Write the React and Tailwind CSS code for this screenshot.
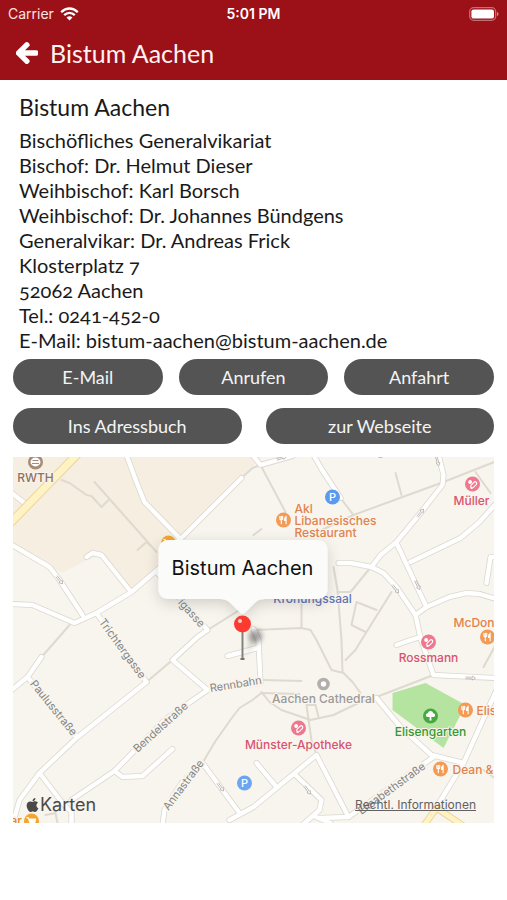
import React from 'react';
import { FaArrowLeft, FaApple } from 'react-icons/fa';

const ADDRESS = [
  'Bischöfliches Generalvikariat',
  'Bischof: Dr. Helmut Dieser',
  'Weihbischof: Karl Borsch',
  'Weihbischof: Dr. Johannes Bündgens',
  'Generalvikar: Dr. Andreas Frick',
  'Klosterplatz 7',
  '52062 Aachen',
  'Tel.: 0241-452-0',
  'E-Mail: bistum-aachen@bistum-aachen.de'
];

const FOOTPATHS = [
  'M62 480L70 483L87 495L92 496L102 507L110 499',
  'M95 482L157 552',
  'M138 550L147 542L150 545',
  'M242 478L253 468L261 465L286 512',
  'M254 535L262 529',
  'M396 473L402 495',
  'M341 498L354 515L444 482L495 462',
  'M354 515L318 532',
  'M476 472L491 493',
  'M334 567L338 590L342 640',
  'M338 592L351 592L369 570',
  'M302 603V628',
  'M254 630L302 628L311 630L317 640L332 670L344 673L353 682L361 693',
  'M343 672L342 640',
  'M346 660L356 650L362 640L392 592',
  'M357 602L377 610M357 602L352 625L366 632',
  'M264 680L302 681',
  'M262 692L270 702L282 710L311 720L334 715L361 702L377 697L434 675',
  'M262 693L300 694',
  'M307 705L309 720L312 740L317 755M307 705L316 705L319 717',
  'M203 763L216 741L233 717L240 708L253 700L262 693',
  'M147 682L173 660',
  'M42 657L57 640L70 625',
  'M208 630L240 610',
  'M484 770L495 778',
  'M484 667L495 647',
  'M46 815L56 813L58 823'
];

const ROADS = [
  'M11 492L25 503',
  'M127 455L137 482L145 502L180 538L170 560',
  'M242 478L182 538',
  'M11 544L50 567L60 580L83 615',
  'M11 604L33 605L75 623L97 613L132 592L160 568L182 548',
  'M87 557L93 553L102 555L130 590',
  'M97 613L147 682',
  'M158 573L208 630L198 637L173 660L208 690',
  'M261 683L208 690L165 720L115 771L72 800',
  'M115 771L123 777L143 776L173 749',
  'M147 682L77 738L40 773L20 800L13 825',
  'M28 677L77 737',
  'M42 657L28 677L11 691',
  'M40 773L63 803L72 812L72 825',
  'M261 683L259 640L254 629',
  'M228 656L258 648',
  'M203 763L240 813M203 763L182 783L165 810L163 825',
  'M230 820L254 807L317 755L349 817',
  'M257 763L277 787',
  'M296 775L322 800L320 810L304 824',
  'M314 816L331 823M320 818L349 817L434 757',
  'M377 698L401 727L432 755L464 763',
  'M497 690L464 763L437 807',
  'M397 645L411 640L421 637',
  'M339 563L351 563L372 567L384 573L397 587L416 615L421 638L434 675L497 678',
  'M439 455L444 475L443 485L421 513L397 542L381 555L372 567',
  'M397 543L427 607',
  'M411 562L461 538L480 522L497 503',
  'M416 615L427 607L450 597L467 593L480 594L497 599',
  'M497 557L491 557L487 583',
  'M314 455L322 469L341 498',
  'M253 455L261 465L293 456'
];

const ONE_WAY = [
  { x: 60, y: 580, r: 52 },
  { x: 282, y: 458, r: -16 },
  { x: 438, y: 461, r: 75 },
  { x: 421, y: 513, r: -52 },
  { x: 396, y: 589, r: 52 },
  { x: 418, y: 585, r: 65 },
  { x: 471, y: 678, r: 3 },
  { x: 221, y: 787, r: 53 },
  { x: 308, y: 790, r: 55 }
];

const STREETS = [
  { name: 'Trichtergasse', x: 99, y: 622, r: 54 },
  { name: 'Paulusstraße', x: 30, y: 684, r: 51 },
  { name: 'Bendelstraße', x: 138, y: 753, r: -42 },
  { name: 'Annastraße', x: 169, y: 811, r: -53 },
  { name: 'Elisabethstraße', x: 362, y: 815, r: -36 },
  { name: 'Rennbahn', x: 211, y: 692, r: -9 },
  { name: 'igasse', x: 178, y: 603, r: 48 }
];

const ORANGE = '#e1824d';
const PINK = '#d9536f';

const POIS = [
  { label: 'RWTH', x: 36, y: 482, color: '#8f7061' },
  { label: 'Akl', x: 295, y: 513, color: ORANGE, anchor: 'start' },
  { label: 'Libanesisches', x: 295, y: 525, color: ORANGE, anchor: 'start' },
  { label: 'Restaurant', x: 295, y: 537, color: ORANGE, anchor: 'start' },
  { label: 'Müller', x: 472, y: 505, color: PINK },
  { label: 'Krönungssaal', x: 313, y: 603, color: '#6276b5' },
  { label: 'McDon', x: 454, y: 627, color: ORANGE, anchor: 'start' },
  { label: 'Rossmann', x: 429, y: 662, color: PINK },
  { label: 'Aachen Cathedral', x: 324, y: 703, color: '#9b9a99' },
  { label: 'Elisengarten', x: 431, y: 736, color: '#35982f' },
  { label: 'Elis', x: 477, y: 715, color: ORANGE, anchor: 'start' },
  { label: 'Münster-Apotheke', x: 299, y: 749, color: PINK },
  { label: 'Dean &', x: 453, y: 774, color: ORANGE, anchor: 'start' },
  { label: 'ar', x: 11, y: 825, color: '#dd8b35', anchor: 'start' }
];

const Fork = () => (
  <g fill="none" stroke="#fff" strokeWidth="1.1" strokeLinecap="round">
    <path d="M-3.6-3.6v2.4q0 1.2 1.4 1.2t1.4-1.2v-2.4M-2.2-3.6v7.4" />
    <path d="M2.6 3.8v-7.4q-1.8 1-1.6 4h1.6" fill="#fff" />
  </g>
);

const Pills = () => (
  <g fill="none" stroke="#fff" strokeWidth="1.1">
    <rect x="-3.6" y="-1.6" width="7.2" height="3.2" rx="1.6" transform="translate(1.2 0.8) rotate(-45)" />
    <circle cx="-2.4" cy="-2" r="1.9" fill="#fff" stroke="none" />
    <circle cx="-1" cy="4" r="1.1" fill="#fff" stroke="none" />
  </g>
);

const Parking = () => (
  <text y="4" textAnchor="middle" fontSize="11" fontWeight="500" fill="#fff">P</text>
);

const Tree = () => (
  <g fill="#fff">
    <path d="M-4.6-.2q-.4-2.2 1.8-2.5Q-2-5 0-5t2.8 2.3q2.2.3 1.8 2.5-.6 1.4-2.4 1.2h-4.4q-1.8.2-2.4-1.2z" />
    <path d="M-.8 0h1.6l.2 4.6h-2z" />
  </g>
);

const Cart = () => (
  <path d="M-5-3.5h1.8l1.4 5.6h5l1.2-4.2h-7z" fill="#fff" stroke="#fff" strokeWidth="0.8" />
);

const BADGES = [
  { x: 284, y: 520, color: '#f39a55', Icon: Fork },
  { x: 488, y: 637, color: '#f39a55', Icon: Fork },
  { x: 466, y: 710, color: '#f39a55', Icon: Fork },
  { x: 441, y: 769, color: '#f39a55', Icon: Fork },
  { x: 473, y: 484, color: '#f0788e', Icon: Pills },
  { x: 429, y: 642, color: '#f0788e', Icon: Pills },
  { x: 299, y: 728, color: '#f0788e', Icon: Pills },
  { x: 333, y: 497, color: '#5b9af0', Icon: Parking },
  { x: 381, y: 450, color: '#5b9af0' },
  { x: 245, y: 783, color: '#6ea5f0', Icon: Parking },
  { x: 431, y: 716, color: '#46a83f', Icon: Tree },
  { x: 32, y: 821, color: '#f2a631', Icon: Cart },
  { x: 169, y: 543, color: '#f2a631', Icon: Cart }
];

const StatusBar = () => (
  <div className="grid grid-cols-3 items-center h-7 px-2 font-['Inter','Liberation_Sans',sans-serif] text-sm text-white">
    <div className="flex items-center gap-1.5">
      <span className="text-red-100">Carrier</span>
      <svg className="w-[19px] h-[14px]" viewBox="0 0 19 14" aria-hidden="true">
        <g fill="none" stroke="#fff" strokeWidth="2.3">
          <path d="M1.2 5.2Q5 1.5 9.5 1.5T17.8 5.2" />
          <path d="M4.2 8.2Q6.6 5.9 9.5 5.9T14.8 8.2" />
        </g>
        <path d="M9.5 13.6L6.5 10.5Q9.5 8.2 12.5 10.5Z" fill="#fff" />
      </svg>
    </div>
    <div className="text-center font-semibold">5:01 PM</div>
    <svg className="w-[30px] h-[14px] justify-self-end" viewBox="0 0 30 14" aria-hidden="true">
      <rect x="0.7" y="0.7" width="26" height="12.6" rx="4" fill="none" stroke="#fff" strokeOpacity="0.4" strokeWidth="1.3" />
      <rect x="2.4" y="2.4" width="22.600" height="9.200" rx="2.200" fill="#fff" />
      <path d="M28 5v4q1.600-.6 1.600-2t-1.600-2z" fill="#fff" fillOpacity="0.5" />
    </svg>
  </div>
);

const ActionButton = ({ children }) => (
  <button
    type="button"
    className="h-9 rounded-full bg-[#545454] text-gray-100 text-lg leading-6 text-center hover:bg-[#444444]"
  >
    {children}
  </button>
);

const MapView = () => (
  <div className="relative h-[366px] overflow-hidden bg-[#f8f5ee] font-['Inter','Liberation_Sans',sans-serif]">
    <svg className="block w-full h-full" viewBox="13 457 482 366" preserveAspectRatio="xMidYMid slice">
      <defs>
        <filter id="calloutShadow" x="-20%" y="-30%" width="140%" height="180%">
          <feDropShadow dx="0" dy="4" stdDeviation="7" floodColor="#000" floodOpacity="0.16" />
        </filter>
        <filter id="pinShadow" x="-50%" y="-50%" width="200%" height="200%">
          <feGaussianBlur stdDeviation="2.5" />
        </filter>
      </defs>

      {/* campus and park */}
      <path
        d="M13 457H262L242 478L182 538L160 567L132 590L103 555L87 560L63 573L50 567L13 545Z"
        fill="#f6eee0"
      />
      <path d="M393 693L426 683L466 705L444 748L393 710Z" fill="#b5e3a0" />

      <g fill="none" strokeLinejoin="round" strokeLinecap="round">
        <g stroke="#dedad0" strokeWidth="2">
          {FOOTPATHS.map(d => <path key={d} d={d} />)}
        </g>
        <g stroke="#dcd8cf" strokeWidth="6">
          {ROADS.map(d => <path key={d} d={d} />)}
        </g>
        <g stroke="#ffffff" strokeWidth="4.4">
          {ROADS.map(d => <path key={d} d={d} />)}
        </g>
        <path d="M8 526L78 454" stroke="#ecd5a0" strokeWidth="9" />
        <path d="M8 526L78 454" stroke="#fff3c4" strokeWidth="7" />
        <path d="M424 826L437 808L464 826" stroke="#ecd5a0" strokeWidth="7" />
        <path d="M424 826L437 808L464 826" stroke="#fff3c4" strokeWidth="5" />
      </g>

      {ONE_WAY.map(a => (
        <path
          key={`${a.x}-${a.y}`}
          d="M-5-.8H2V-2L5 0L2 2V.8H-5"
          transform={`translate(${a.x} ${a.y}) rotate(${a.r})`}
          fill="#fff"
          stroke="#aaa8a4"
          strokeWidth="0.7"
        />
      ))}

      {/* street names and places */}
      <g stroke="#f8f5ee" strokeWidth="4" strokeLinejoin="round" paintOrder="stroke">
        {STREETS.map(s => (
          <text
            key={s.name}
            transform={`translate(${s.x} ${s.y}) rotate(${s.r})`}
            fontSize="11"
            fill="#858482"
          >
            {s.name}
          </text>
        ))}
      </g>
      {BADGES.map(({ x, y, color, Icon }) => (
        <g key={`${x}-${y}`} transform={`translate(${x} ${y})`}>
          <circle r="7.5" fill={color} />
          {Icon && <Icon />}
        </g>
      ))}
      <circle cx="36" cy="462" r="7.5" fill="#a88b77" />
      <ellipse cx="36" cy="462" rx="5" ry="4.4" fill="#fff" />
      <path d="M33 460.5h6M32.5 463.5h7" stroke="#a88b77" strokeWidth="1.2" />
      <circle cx="324" cy="684" r="4.5" fill="#fff" stroke="#b1afac" strokeWidth="3.6" />
      <g stroke="#f8f5ee" strokeWidth="2" strokeLinejoin="round" paintOrder="stroke">
        {POIS.map(p => (
          <text
            key={p.label}
            x={p.x}
            y={p.y}
            textAnchor={p.anchor || 'middle'}
            fontSize="12"
            fontWeight="500"
            fill={p.color}
          >
            {p.label}
          </text>
        ))}
      </g>

      {/* callout with pin */}
      <path d="M245 657L252 632L262 636Z" fill="#000" fillOpacity="0.12" filter="url(#pinShadow)" />
      <circle cx="256" cy="636" r="7" fill="#000" fillOpacity="0.3" filter="url(#pinShadow)" />
      <path
        d="M170 540H317Q328 540 328 551V588Q328 599 317 599H265Q259 599 255 603L246 612Q243 615 240 612L231 603Q227 599 221 599H170Q159 599 159 588V551Q159 540 170 540Z"
        fill="#fbfbfa"
        filter="url(#calloutShadow)"
      />
      <text x="243" y="575" textAnchor="middle" fontSize="20" fill="#111">Bistum Aachen</text>
      <path d="M243 630V658" stroke="#85827e" strokeWidth="2" />
      <ellipse cx="243" cy="659" rx="2.5" ry="1" fill="#6b6966" />
      <circle cx="243" cy="624" r="8.5" fill="#fb3a30" />
      <circle cx="240.5" cy="621" r="2" fill="#ffd0cb" />
    </svg>
    <div className="absolute left-3 bottom-1.5 flex items-center text-lg leading-6 text-[#4b4a48]">
      <FaApple className="w-[15px] h-[16px]" aria-hidden="true" />
      Karten
    </div>
    <a href="#legal" className="absolute right-[18px] bottom-2.5 text-xs leading-4 text-[#62615f] underline">
      Rechtl. Informationen
    </a>
  </div>
);

const App = () => {
  return (
    <div className="min-h-screen bg-white font-['Lato','Open_Sans',sans-serif]">
      <header className="bg-[#9c1017] h-20">
        <StatusBar />
        <div className="flex items-center gap-3 h-[50px] px-4 text-white">
          <button type="button" aria-label="Zurück">
            <FaArrowLeft className="w-[22px] h-[24px] stroke-white stroke-[36px]" />
          </button>
          <h1 className="text-[25px] leading-8 text-red-50">Bistum Aachen</h1>
        </div>
      </header>
      <main className="px-[13px] pt-3">
        <section className="px-1.5 text-[#1a1a1a]">
          <h2 className="text-[23px] leading-[30px]">Bistum Aachen</h2>
          <div className="mt-1.5 text-xl leading-[25px] oldstyle-nums">
            {ADDRESS.map(line => <p key={line}>{line}</p>)}
          </div>
        </section>
        <div className="grid grid-cols-3 gap-4 mt-1.5">
          <ActionButton>E-Mail</ActionButton>
          <ActionButton>Anrufen</ActionButton>
          <ActionButton>Anfahrt</ActionButton>
        </div>
        <div className="grid grid-cols-2 gap-6 my-[13px]">
          <ActionButton>Ins Adressbuch</ActionButton>
          <ActionButton>zur Webseite</ActionButton>
        </div>
        <MapView />
      </main>
    </div>
  );
};

export default App;
